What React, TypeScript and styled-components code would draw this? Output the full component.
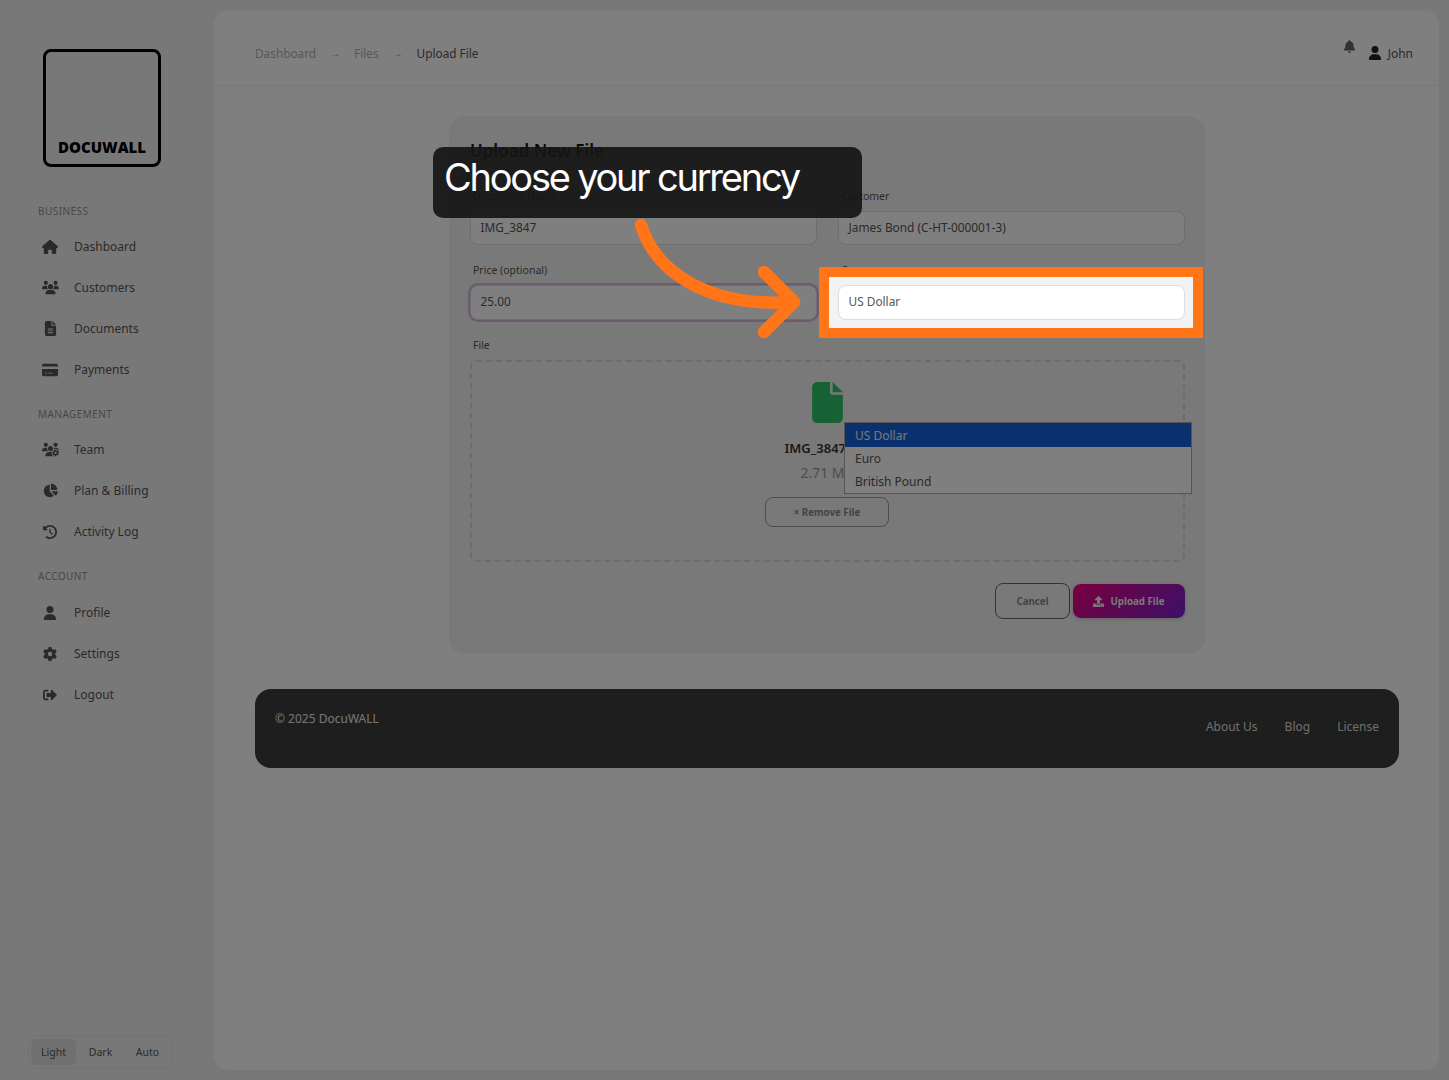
import React from 'react'
import styled, { createGlobalStyle } from 'styled-components'
import { FaSignOutAlt, FaUpload } from 'react-icons/fa'
import {
  FaBell,
  FaChartPie,
  FaClockRotateLeft,
  FaCreditCard,
  FaFile,
  FaFileLines,
  FaGear,
  FaHouse,
  FaUser,
  FaUsers,
  FaUsersGear,
} from 'react-icons/fa6'

const GlobalStyle = createGlobalStyle`
  html, body {
    margin: 0;
    padding: 0;
    height: 100%;
    overflow: hidden;
    background: #f1f1f3;
    font-family: 'Noto Sans', 'Open Sans', sans-serif;
  }
  * { box-sizing: border-box; }
`

const Shell = styled.div`
  position: relative;
  display: flex;
  width: 1449px;
  height: 1080px;
  overflow: hidden;
  background: #f1f1f3;
`

const Sidebar = styled.aside`
  width: 214px;
  flex: none;
  display: flex;
  flex-direction: column;
  padding: 49px 0 11px 28px;
`

const Logo = styled.div`
  width: 118px;
  height: 118px;
  margin-left: 15px;
  border: 3px solid #000;
  border-radius: 8px;
  display: flex;
  align-items: flex-end;
  justify-content: center;
  padding-bottom: 7px;
  font-family: 'Open Sans', sans-serif;
  font-size: 15px;
  font-weight: 800;
  line-height: 20px;
  color: #000;
`

const SectionLabel = styled.div<{ $top: number; $bottom: number }>`
  margin: ${p => p.$top}px 0 ${p => p.$bottom}px 10px;
  font-size: 10px;
  line-height: 16px;
  letter-spacing: 0.45px;
  color: #909090;
`

const NavItem = styled.div`
  display: flex;
  align-items: center;
  height: 41px;
  margin-left: 4px;
  font-size: 12px;
  color: #555;
`

const NavIcon = styled.span<{ $size: number }>`
  width: 36px;
  display: flex;
  justify-content: center;
  margin-right: 6px;
  font-size: ${p => p.$size}px;
  color: #555;
`

const ThemeSwitch = styled.div`
  margin-top: auto;
  width: 144px;
  height: 34px;
  border: 1px solid #e4e4e6;
  border-radius: 8px;
  padding: 3px 2px;
  display: flex;
  gap: 2px;
  align-items: stretch;
`

const ThemeOption = styled.div<{ $active?: boolean }>`
  flex: 0 0 45px;
  display: flex;
  align-items: center;
  justify-content: center;
  border-radius: 6px;
  font-size: 10.5px;
  color: #555;
  background: ${p => (p.$active ? '#e0e0e2' : 'transparent')};
`

const Main = styled.main`
  flex: 1;
  margin: 11px 10px 10px 0;
  background: #fff;
  border-radius: 14px;
  display: flex;
  flex-direction: column;
  min-width: 0;
`

const TopBar = styled.header`
  height: 75px;
  flex: none;
  display: flex;
  align-items: center;
  justify-content: space-between;
  padding: 10px 26px 0 41px;
  border-bottom: 1px solid #f0f0f2;
`

const Crumbs = styled.nav`
  display: flex;
  align-items: center;
  font-size: 11.8px;
  color: #b0b0b0;
`

const Crumb = styled.span<{ $current?: boolean }>`
  color: ${p => (p.$current ? '#555' : '#b0b0b0')};
`

const CrumbArrow = styled.span`
  margin: 0 14px;
  font-family: 'Liberation Sans', sans-serif;
  font-size: 10px;
  color: #888;
`

const UserArea = styled.div`
  display: flex;
  align-items: center;
  font-size: 12px;
  color: #555;
`

const Bell = styled.span`
  display: flex;
  margin: -14px 12px 0 0;
  font-size: 13px;
  color: #666;
`

const UserIcon = styled.span`
  display: flex;
  margin-right: 6px;
  font-size: 14px;
  color: #222;
`

const Content = styled.div`
  padding: 30px 40px 0 41px;
  display: flex;
  flex-direction: column;
`

const FormCard = styled.section`
  width: 756px;
  height: 538px;
  margin-left: 194px;
  padding: 23px 20px 0 21px;
  background: #f2f2f4;
  border-radius: 16px;
`

const FormTitle = styled.h2`
  margin: 0 0 26px;
  font-size: 17px;
  line-height: 24px;
  font-weight: 600;
  color: #111;
`

const FieldGrid = styled.div`
  display: grid;
  grid-template-columns: 347px 347px;
  column-gap: 21px;
  row-gap: 18px;
`

const Field = styled.div`
  display: flex;
  flex-direction: column;
`

const FileField = styled(Field)`
  margin-top: 18px;
`

const Label = styled.label`
  margin: 0 0 8px 3px;
  font-size: 10.5px;
  line-height: 14px;
  color: #555;
`

const Input = styled.div<{ $focused?: boolean; $tall?: boolean }>`
  height: ${p => (p.$tall ? '35px' : '34px')};
  display: flex;
  align-items: center;
  padding: 0 9px ${p => (p.$tall ? '3px' : '2px')} 9.5px;
  background: #fff;
  border: 1px solid #dcdce2;
  border-radius: 8px;
  font-size: 11.85px;
  color: #555;
  box-shadow: ${p => (p.$focused ? '0 0 0 2px #d8b4dc' : 'none')};
`

const DropZone = styled.div`
  position: relative;
  height: 202px;
  padding: 20px 1px 0 0;
  border: 2px dashed #d8d8da;
  border-radius: 6px;
  display: flex;
  flex-direction: column;
  align-items: center;
`

const FileIcon = styled.span`
  display: flex;
  font-size: 41px;
  color: #2cc46a;
`

const FileName = styled.div`
  margin-top: 16px;
  font-size: 13px;
  line-height: 19px;
  font-weight: 600;
  color: #333;
`

const FileSize = styled.div`
  margin-top: 5px;
  font-size: 14px;
  line-height: 19px;
  color: #999;
`

const RemoveButton = styled.button`
  width: 124px;
  height: 30px;
  margin-top: 15px;
  border: 1px solid #999;
  border-radius: 8px;
  background: transparent;
  font-family: inherit;
  font-size: 9.75px;
  font-weight: 700;
  color: #888;
`

const Actions = styled.div`
  display: flex;
  justify-content: flex-end;
  align-items: center;
  gap: 3px;
  margin-top: 21px;
`

const CancelButton = styled.button`
  width: 75px;
  height: 36px;
  border: 1px solid #666;
  border-radius: 8px;
  background: transparent;
  font-family: inherit;
  font-size: 9.75px;
  font-weight: 700;
  color: #888;
`

const UploadButton = styled.button`
  width: 112px;
  height: 34px;
  border: 0;
  border-radius: 8px;
  background: linear-gradient(135deg, #f0007c, #7a20d0);
  display: flex;
  align-items: center;
  justify-content: center;
  gap: 6px;
  font-family: inherit;
  font-size: 9.75px;
  font-weight: 700;
  color: #f0f0f0;
  box-shadow: 0 1px 4px rgba(0, 0, 0, 0.2);

  svg {
    font-size: 11px;
  }
`

const OptionList = styled.ul`
  position: absolute;
  left: 372px;
  top: 60px;
  width: 348px;
  height: 72px;
  margin: 0;
  padding: 0;
  list-style: none;
  background: #fff;
  border: 1px solid #aaa;
`

const Option = styled.li<{ $selected?: boolean }>`
  height: ${p => (p.$selected ? '24px' : '23px')};
  padding: 0 10px;
  display: flex;
  align-items: center;
  font-size: 12px;
  color: ${p => (p.$selected ? '#f0f0f0' : '#555')};
  background: ${p => (p.$selected ? '#1462dc' : 'transparent')};
`

const Footer = styled.footer`
  height: 79px;
  margin-top: 35px;
  padding: 21px 20px 0;
  display: flex;
  justify-content: space-between;
  border-radius: 16px;
  background: #3c3c3c;
  font-size: 12px;
  color: #eee;
`

const FooterLinks = styled.div`
  display: flex;
  gap: 27px;
  padding-top: 8px;
  color: #ddd;
`

const Spotlight = styled.div`
  position: absolute;
  left: 819px;
  top: 267px;
  width: 384px;
  height: 71px;
  border: 10px solid #ff7518;
  box-shadow: 0 0 0 3000px rgba(0, 0, 0, 0.5);
`

const Arrow = styled.svg`
  position: absolute;
  left: 620px;
  top: 210px;
`

const Tooltip = styled.div`
  position: absolute;
  left: 433px;
  top: 147px;
  width: 429px;
  height: 71px;
  padding: 0 0 12px 11px;
  display: flex;
  align-items: center;
  border-radius: 10px;
  background: rgba(22, 22, 22, 0.92);
  font-family: Inter, sans-serif;
  font-size: 38px;
  letter-spacing: -2.22px;
  white-space: nowrap;
  color: #fff;
`

const sections = [
  {
    title: 'BUSINESS',
    top: 36,
    bottom: 7,
    items: [
      { label: 'Dashboard', icon: <FaHouse />, size: 16 },
      { label: 'Customers', icon: <FaUsers />, size: 17 },
      { label: 'Documents', icon: <FaFileLines />, size: 15 },
      { label: 'Payments', icon: <FaCreditCard />, size: 16 },
    ],
  },
  {
    title: 'MANAGEMENT',
    top: 16,
    bottom: 7,
    items: [
      { label: 'Team', icon: <FaUsersGear />, size: 17 },
      { label: 'Plan & Billing', icon: <FaChartPie />, size: 15 },
      { label: 'Activity Log', icon: <FaClockRotateLeft />, size: 14 },
    ],
  },
  {
    title: 'ACCOUNT',
    top: 16,
    bottom: 8,
    items: [
      { label: 'Profile', icon: <FaUser />, size: 14 },
      { label: 'Settings', icon: <FaGear />, size: 14 },
      { label: 'Logout', icon: <FaSignOutAlt />, size: 14 },
    ],
  },
]

const App = (): React.ReactElement => (
  <Shell>
    <GlobalStyle />
    <Sidebar>
      <Logo>DOCUWALL</Logo>
      {sections.map(section => (
        <React.Fragment key={section.title}>
          <SectionLabel $top={section.top} $bottom={section.bottom}>
            {section.title}
          </SectionLabel>
          {section.items.map(item => (
            <NavItem key={item.label}>
              <NavIcon $size={item.size}>{item.icon}</NavIcon>
              {item.label}
            </NavItem>
          ))}
        </React.Fragment>
      ))}
      <ThemeSwitch>
        <ThemeOption $active>Light</ThemeOption>
        <ThemeOption>Dark</ThemeOption>
        <ThemeOption>Auto</ThemeOption>
      </ThemeSwitch>
    </Sidebar>

    <Main>
      <TopBar>
        <Crumbs>
          <Crumb>Dashboard</Crumb>
          <CrumbArrow>→</CrumbArrow>
          <Crumb>Files</Crumb>
          <CrumbArrow>→</CrumbArrow>
          <Crumb $current>Upload File</Crumb>
        </Crumbs>
        <UserArea>
          <Bell>
            <FaBell />
          </Bell>
          <UserIcon>
            <FaUser />
          </UserIcon>
          John
        </UserArea>
      </TopBar>

      <Content>
        <FormCard>
          <FormTitle>Upload New File</FormTitle>
          <FieldGrid>
            <Field>
              <Label>Document Name</Label>
              <Input>IMG_3847</Input>
            </Field>
            <Field>
              <Label>Customer</Label>
              <Input>James Bond (C-HT-000001-3)</Input>
            </Field>
            <Field>
              <Label>Price (optional)</Label>
              <Input $tall $focused>
                25.00
              </Input>
            </Field>
            <Field>
              <Label>Currency</Label>
              <Input $tall>US Dollar</Input>
            </Field>
          </FieldGrid>
          <FileField>
            <Label>File</Label>
            <DropZone>
              <FileIcon>
                <FaFile />
              </FileIcon>
              <FileName>IMG_3847.jpg</FileName>
              <FileSize>2.71 MB</FileSize>
              <RemoveButton>× Remove File</RemoveButton>
              <OptionList>
                <Option $selected>US Dollar</Option>
                <Option>Euro</Option>
                <Option>British Pound</Option>
              </OptionList>
            </DropZone>
          </FileField>
          <Actions>
            <CancelButton>Cancel</CancelButton>
            <UploadButton>
              <FaUpload />
              Upload File
            </UploadButton>
          </Actions>
        </FormCard>
        <Footer>
          <span>© 2025 DocuWALL</span>
          <FooterLinks>
            <span>About Us</span>
            <span>Blog</span>
            <span>License</span>
          </FooterLinks>
        </Footer>
      </Content>
    </Main>

    <Spotlight />
    <Tooltip>Choose your currency</Tooltip>
    <Arrow width="200" height="135" viewBox="0 0 200 135" fill="none" stroke="#ff7518" strokeLinecap="round" strokeLinejoin="round" strokeWidth="12.5">
      <path d="M21 15C35 60 85 98 174 92" />
      <path d="M144 62L174 92L144 122" />
    </Arrow>
  </Shell>
)

export default App
